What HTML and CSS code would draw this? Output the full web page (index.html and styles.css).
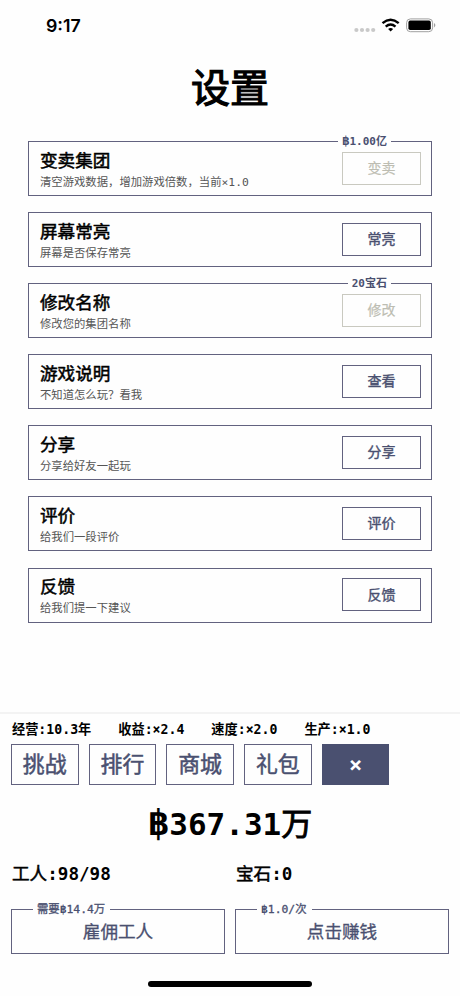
FILE: index.html
```html
<!DOCTYPE html>
<html lang="zh-CN">
<head>
<meta charset="utf-8">
<title>设置</title>
<link rel="stylesheet" href="styles.css">
</head>
<body>
<div class="screen">
  <header class="status">
    <span class="time">9:17</span>
    <svg class="indicators" width="84" height="18" viewBox="0 0 84 18">
      <g fill="#c9c9c9"><circle cx="3.4" cy="12" r="2.1"/><circle cx="9" cy="12" r="2.1"/><circle cx="14.6" cy="12" r="2.1"/><circle cx="20.2" cy="12" r="2.1"/></g>
      <g fill="none" stroke="#000" stroke-width="2.4"><path d="M29.5 5.1Q37.6-1.7 45.7 5.1"/><path d="M32.7 8.6Q37.6 4.3 42.5 8.6"/></g>
      <path d="M35.1 10.9Q37.6 9 40.1 10.9L37.6 13.5Z"/>
      <rect x="53.6" y=".9" width="26" height="12.8" rx="3.8" fill="none" stroke="#a0a0a0"/>
      <rect x="55.4" y="2.6" width="22.4" height="9.4" rx="1.8"/>
      <path d="M81 5Q83.8 7.2 81 9.4Z" fill="#a0a0a0"/>
    </svg>
  </header>
  <h1 class="title">设置</h1>
  <main class="list">
    <section class="card"><div><h2>变卖集团</h2><p>清空游戏数据，增加游戏倍数，当前×1.0</p></div><button class="action disabled">变卖</button><span class="price"><span class="baht">฿</span>1.00亿</span></section>
    <section class="card"><div><h2>屏幕常亮</h2><p>屏幕是否保存常亮</p></div><button class="action">常亮</button></section>
    <section class="card"><div><h2>修改名称</h2><p>修改您的集团名称</p></div><button class="action disabled">修改</button><span class="price">20宝石</span></section>
    <section class="card"><div><h2>游戏说明</h2><p>不知道怎么玩？看我</p></div><button class="action">查看</button></section>
    <section class="card"><div><h2>分享</h2><p>分享给好友一起玩</p></div><button class="action">分享</button></section>
    <section class="card"><div><h2>评价</h2><p>给我们一段评价</p></div><button class="action">评价</button></section>
    <section class="card"><div><h2>反馈</h2><p>给我们提一下建议</p></div><button class="action">反馈</button></section>
  </main>
  <footer class="panel">
    <div class="stats"><span>经营:10.3年</span><span>收益:×2.4</span><span>速度:×2.0</span><span>生产:×1.0</span></div>
    <nav class="tabs"><button>挑战</button><button>排行</button><button>商城</button><button>礼包</button><button class="close">×</button></nav>
    <div class="money"><span class="baht">฿</span>367.31<span class="unit">万</span></div>
    <div class="pair counts"><span><span class="cjk">工人</span>:98/98</span><span><span class="cjk">宝石</span>:0</span></div>
    <div class="pair">
      <button class="big"><span class="legend">需要<span class="baht">฿</span>14.4万</span>雇佣工人</button>
      <button class="big"><span class="legend"><span class="baht">฿</span>1.0/次</span>点击赚钱</button>
    </div>
    <div class="home"></div>
  </footer>
</div>
</body>
</html>
```
FILE: styles.css
```css
* { box-sizing: border-box; margin: 0; padding: 0; }
body { background: #fefefe; color: #000; font-family: "DejaVu Sans Mono", "Noto Sans CJK SC", monospace; }
button { font: inherit; color: #4a5070; background: transparent; border: 1px solid #62627f; }
.screen { width: 460px; height: 996px; overflow: hidden; display: flex; flex-direction: column; }
.status { height: 50px; padding: 14px 24px 0 46px; display: flex; justify-content: space-between; flex: none; }
.time { font: 600 17.8px/24px Inter, sans-serif; }
.indicators { margin: 4px -1px 0 0; }
.title { height: 76px; flex: none; text-align: center; font-size: 39px; line-height: 78px; font-weight: 400; -webkit-text-stroke: 1.2px #000; }
.list { padding: 15px 28px 0; display: grid; grid-auto-rows: 55px; row-gap: 16.1px; height: 586px; flex: none; }
.card { position: relative; border: 1px solid #62627f; padding: 0 10px 0 11px; display: flex; justify-content: space-between; align-items: center; }
.card h2 { font-size: 17.6px; line-height: 24px; padding-top: 2px; font-weight: 400; -webkit-text-stroke: .5px #000; }
.card p { font-size: 11.35px; line-height: 18px; color: #555; }
.action { width: 79px; height: 33px; margin-top: -1px; font-size: 14px; line-height: 30px; font-weight: 400; -webkit-text-stroke: .4px #4a5070; }
.disabled { color: #bdbdb2; border-color: #c9c9c0; -webkit-text-stroke: .2px #bdbdb2; }
.price { position: absolute; right: 40px; top: -8px; padding: 0 4px; background: #fefefe; color: #4a5070; font-size: 11px; line-height: 16px; font-weight: 700; }
.panel { height: 284px; flex: none; border-top: 2px solid #f3f3f3; padding: 0 11px; }
.stats { display: flex; gap: 27px; padding: 7px 0 0 1px; height: 30px; font-size: 13.2px; line-height: 18px; font-weight: 700; white-space: nowrap; }
.tabs { display: flex; gap: 10.2px; height: 41px; }
.tabs button { width: 67.5px; font-size: 21.9px; line-height: 38px; -webkit-text-stroke: .5px #4a5070; }
.tabs .close { background: #4a5070; border-color: #4a5070; color: #fff; font-weight: 700; -webkit-text-stroke: 0; }
.money { text-align: center; font-size: 31px; line-height: 79px; height: 76px; font-weight: 700; }
.baht { font-size: 1.15em; line-height: 1; font-weight: 700; }
.unit { font-weight: 400; -webkit-text-stroke: .9px #000; }
.cjk { font-weight: 400; -webkit-text-stroke: .5px #000; }
.pair { display: grid; grid-template-columns: 214px 214px; column-gap: 10px; }
.counts { font-size: 17.6px; line-height: 26px; padding: 0 0 0 1px; height: 48px; font-weight: 700; }
.big { position: relative; height: 45px; font-size: 17.6px; line-height: 42px; -webkit-text-stroke: .3px #4a5070; }
.legend { position: absolute; left: 21px; top: -9px; padding: 0 5px 0 4px; background: #fefefe; font-size: 11.35px; line-height: 16px; -webkit-text-stroke: .3px #4a5070; }
.legend .baht { font-size: 1em; -webkit-text-stroke: 0; }
.home { width: 164px; height: 5.5px; margin: 27px auto 0; border-radius: 3px; background: #000; }
```
